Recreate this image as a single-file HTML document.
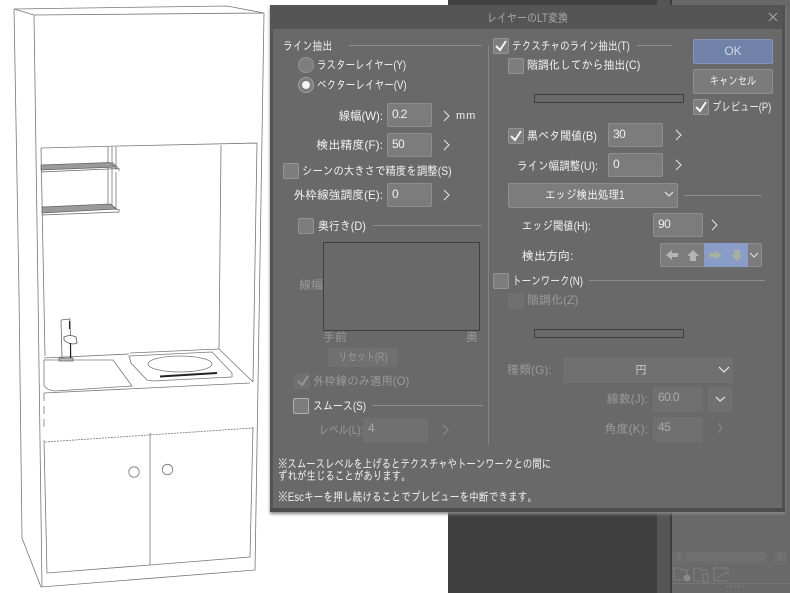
<!DOCTYPE html>
<html lang="ja"><head><meta charset="utf-8"><title>レイヤーのLT変換</title>
<style>
html,body{margin:0;padding:0;width:790px;height:593px;overflow:hidden;background:#fff}
body{position:relative;font-family:"Liberation Sans","IPAGothic","Noto Sans CJK JP",sans-serif;font-size:12px;color:#f0f0f0}
div{position:absolute;box-sizing:border-box}
.t{white-space:nowrap;line-height:14px;height:14px;transform:scaleX(var(--k,1));transform-origin:0 50%}
.d{color:#9a9a9a}
.r{text-align:right;transform-origin:100% 50%}
.m{text-align:center;transform-origin:50% 50%}
.i{background:#7c7c7c;border:1px solid #8e8e8e;border-radius:2px;color:#eee;padding:3px 0 0 4px;line-height:14px;font-size:12px;letter-spacing:-.6px}
.id{background:#707070;border:0;border-radius:2px;color:#aaa;padding:3px 0 0 6px;line-height:14px;font-size:12px;letter-spacing:-.6px}
.c{background:#7d7d7d;border:1px solid #949494;border-radius:2px;width:16px;height:16px}
.l{height:1px;background:#8c8c8c}
.b{background:#696969;border:1px solid #3f3f3f;height:9px;width:150px;left:534px}
svg{position:absolute;left:0;top:0}
</style></head><body>
<div style="left:448px;top:0;width:209px;height:593px;background:#404040"></div>
<div style="left:657px;top:0;width:13px;height:593px;background:#555"></div>
<div style="left:670px;top:0;width:2px;height:593px;background:#3c3c3c"></div>
<div style="left:672px;top:0;width:118px;height:593px;background:#696969"></div>
<svg width="790" height="593" viewBox="0 0 790 593" fill="none" stroke="#777" stroke-width=".8">
<path d="M14 9L34 15L264 13L227 6L14 9M14 9L19 293L22 538L41 587L255 570L264 13M34 15L38 293L42 587"/>
<path d="M41 148L120 146L257 143L253 382M41 148L45 356M221 145L219 349L253 382M44 358L129 354M130 353L219 349M44 393L250 383M44 440L47 573L150 565L250 557L253 427M150 433V565"/>
<path d="M44 393V428" stroke-dasharray="8 5"/>
<path d="M45 442L253 428" stroke-dasharray="2 1"/>
<path d="M108 147V204M112 147V206M116 147V170M116 172V210M112 162L118 168M110 204L118 210"/>
<path d="M41 165L110 162.500L116 167L41 170Z M42 207L110 204L116 209L42 213Z" fill="#9a9a9a" stroke="#666"/>
<path d="M41 172L119 168.500V171M42 215L119 212V209" stroke="#666"/>
<path d="M44 360L113 360L132 386L55 391Q46 390 44 385Z"/>
<path d="M129 356L212 352L232 373L232 377L153 381L147 380L131 363Z"/>
<ellipse cx="180" cy="364" rx="32" ry="8"/>
<path d="M160 376.500L217 373" stroke="#222" stroke-width="2"/>
<path d="M61 320L70 319L71 358M61 320L62 358" stroke="#666"/>
<path d="M59 358H73V361H59Z" fill="#bbb" stroke="#666"/>
<path d="M64 337Q70 334 76 337L77 343L74 344Q68 344 64 340Z" fill="#fff" stroke="#555"/>
<path d="M70.500 343V358M69.500 321V329" stroke="#222" stroke-width="1.100"/>
<circle cx="134" cy="472" r="5.200"/><circle cx="167.500" cy="469.500" r="5.200"/>
</svg>

<div style="left:672px;top:552px;width:11px;height:10px;background:#6f6f6f"></div>
<div style="left:685px;top:552px;width:82px;height:10px;border-radius:5px;background:#707070"></div>
<div style="left:775px;top:552px;width:11px;height:10px;background:#6f6f6f"></div>
<div style="left:672px;top:563px;width:118px;height:1px;background:#6f6f6f"></div>
<div style="left:672px;top:583px;width:118px;height:1px;background:#757575"></div>
<svg width="790" height="593" viewBox="0 0 790 593" fill="none" stroke="#7f7f7f" stroke-width="1">
<path d="M674 580V568H680L682 570H687V574M674 580H683M694 581V568H699L701 570H707V573M694 581H701M714 581V568H728V574M714 581H728M717 578L727 572"/>
<circle cx="687" cy="578" r="3.500" fill="#8a8a8a" stroke="none"/>
<path d="M703 574H708V582H703ZM702 574H709"/>
<path d="M680 554L677 557L680 560M779 554L782 557L779 560"/>
<path d="M727 586.500H745" stroke-dasharray="1 3" stroke="#8f8f8f"/>
</svg>

<!-- dialog -->
<div style="left:270px;top:5px;width:515px;height:507px;background:#555;box-shadow:0 2px 3px #888"></div>
<div style="left:273px;top:29px;width:509px;height:479px;background:#696969"></div>
<div style="left:782px;top:5px;width:3px;height:507px;background:#505050"></div>
<div style="left:270px;top:508px;width:515px;height:4px;background:#4c4c4c"></div>
<div class="t d m" style="left:270px;top:11px;width:515px;color:#a8a8a8;--k:.835">レイヤーのLT変換</div>
<svg width="790" height="593" viewBox="0 0 790 593" fill="none" stroke="#a8a8a8" stroke-width="1" style="z-index:1"><path d="M769 13L777 21M777 13L769 21"/></svg>

<div class="t" style="left:283px;top:39px;--k:.82">ライン抽出</div><div class="l" style="left:349px;top:45px;width:133px"></div>
<div style="left:298px;top:57px;width:16px;height:16px;border-radius:50%;background:#7d7d7d;border:1px solid #949494"></div>
<div class="t" style="left:317px;top:58px;--k:.795">ラスターレイヤー(Y)</div>
<div style="left:298px;top:77px;width:16px;height:16px;border-radius:50%;background:#7d7d7d;border:1px solid #a0a0a0"></div>
<div style="left:302px;top:81px;width:8px;height:8px;border-radius:50%;background:#f4f4f4"></div>
<div class="t" style="left:317px;top:78px;--k:.8">ベクターレイヤー(V)</div>

<div class="t r" style="left:283px;width:100px;top:109px;--k:.95">線幅(W):</div><div class="i" style="left:387px;top:103px;width:45px;height:24px">0.2</div>
<div class="t" style="left:456px;top:109px;font-size:11px;letter-spacing:1px">mm</div>
<div class="t r" style="left:283px;width:100px;top:138px">検出精度(F):</div><div class="i" style="left:387px;top:133px;width:45px;height:24px">50</div>
<div class="c" style="left:283px;top:163px"></div><div class="t" style="left:302px;top:164px;--k:.87">シーンの大きさで精度を調整(S)</div>
<div class="t r" style="left:283px;width:100px;top:188px;--k:.98">外枠線強調度(E):</div><div class="i" style="left:387px;top:183px;width:45px;height:24px">0</div>
<div class="c" style="left:298px;top:218px"></div><div class="t" style="left:318px;top:219px;--k:.91">奥行き(D)</div><div class="l" style="left:373px;top:225px;width:109px"></div>
<div style="left:323px;top:242px;width:157px;height:89px;border:1px solid #3f3f3f;background:#696969"></div>
<div class="t d" style="left:299px;top:278px">線幅</div>
<div class="t d" style="left:323px;top:330px">手前</div><div class="t d" style="left:466px;top:330px">奥</div>
<div style="left:328px;top:348px;width:70px;height:19px;background:#707070;border-radius:2px"></div>
<div class="t d m" style="left:328px;top:350px;width:70px;--k:.76">リセット(R)</div>
<div class="c" style="left:294px;top:373px;background:#707070;border:0"></div><div class="t d" style="left:313px;top:374px;--k:.95">外枠線のみ適用(O)</div>
<div class="c" style="left:293px;top:398px;border-color:#b0b0b0"></div><div class="t" style="left:313px;top:399px;--k:.83">スムース(S)</div><div class="l" style="left:372px;top:405px;width:111px"></div>
<div class="t d" style="left:319px;top:423px;--k:.82">レベル(L):</div><div class="id" style="left:363px;top:418px;width:65px;height:24px;padding-left:5px">4</div>

<div style="left:488px;top:45px;width:1px;height:400px;background:#858585"></div>

<div class="c" style="left:493px;top:38px"></div><div class="t" style="left:512px;top:39px;--k:.8">テクスチャのライン抽出(T)</div><div class="l" style="left:637px;top:45px;width:35px"></div>
<div class="c" style="left:508px;top:58px"></div><div class="t" style="left:527px;top:58px;--k:.91">階調化してから抽出(C)</div>
<div class="b" style="top:94px"></div>
<div style="left:693px;top:39px;width:80px;height:25px;background:#7082a8;border:1px solid #8494b8;border-radius:2px;text-align:center;line-height:23px;color:#cfd8ea">OK</div>
<div style="left:693px;top:69px;width:80px;height:25px;background:#7b7b7b;border:1px solid #8e8e8e;border-radius:2px"></div>
<div class="t m" style="left:693px;top:74px;width:80px;--k:.78">キャンセル</div>
<div class="c" style="left:693px;top:99px"></div><div class="t" style="left:712px;top:100px;--k:.78">プレビュー(P)</div>
<div class="c" style="left:508px;top:128px"></div><div class="t" style="left:527px;top:129px;--k:.92">黒ベタ閾値(B)</div><div class="i" style="left:608px;top:123px;width:55px;height:24px">30</div>
<div class="t" style="left:517px;top:159px;--k:.88">ライン幅調整(U):</div><div class="i" style="left:608px;top:153px;width:55px;height:24px">0</div>
<div style="left:508px;top:183px;width:170px;height:25px;background:#7c7c7c;border:1px solid #8e8e8e;border-radius:2px"></div>
<div class="t" style="left:545px;top:188px;--k:.88">エッジ検出処理1</div><div class="l" style="left:684px;top:195px;width:78px"></div>
<div class="t" style="left:522px;top:219px;--k:.86">エッジ閾値(H):</div><div class="i" style="left:653px;top:213px;width:50px;height:24px">90</div>
<div class="t" style="left:522px;top:249px">検出方向:</div>
<div style="left:660px;top:243px;width:102px;height:24px;background:#7c7c7c;border:1px solid #8e8e8e;border-radius:2px"></div>
<div style="left:704px;top:243px;width:44px;height:24px;background:#8a9dc8"></div>
<div class="c" style="left:493px;top:273px"></div><div class="t" style="left:512px;top:274px;--k:.8">トーンワーク(N)</div><div class="l" style="left:589px;top:280px;width:176px"></div>
<div class="c" style="left:508px;top:293px;background:#707070;border:0"></div><div class="t d" style="left:527px;top:293px">階調化(Z)</div>
<div class="b" style="top:329px"></div>
<div class="t d" style="left:507px;top:363px">種類(G):</div>
<div style="left:563px;top:358px;width:170px;height:25px;background:#707070;border-radius:2px"></div>
<div class="t" style="left:635px;top:363px;color:#c8c8c8">円</div>
<div class="t d r" style="left:580px;width:68px;top:392px">線数(J):</div><div class="id" style="left:653px;top:387px;width:50px;height:25px;padding-left:5px">60.0</div>
<div style="left:708px;top:387px;width:25px;height:25px;background:#707070;border-radius:2px"></div>
<div class="t d r" style="left:580px;width:68px;top:422px">角度(K):</div><div class="id" style="left:653px;top:417px;width:50px;height:25px;padding-left:5px">45</div>

<div class="t" style="left:278px;top:457px;--k:.785">※スムースレベルを上げるとテクスチャやトーンワークとの間に</div>
<div class="t" style="left:278px;top:469px;--k:.79">ずれが生じることがあります。</div>
<div class="t" style="left:278px;top:490px;--k:.81">※Escキーを押し続けることでプレビューを中断できます。</div>

<svg width="790" height="593" viewBox="0 0 790 593" fill="none" stroke="#e6e6e6" stroke-width="1.300" style="z-index:2">
<path d="M444 111L449 116L444 121M444 140L449 145L444 150M444 190L449 195L444 200M676 130L681 135L676 140M676 160L681 165L676 170M712 220L717 225L712 230" stroke-width="1"/>
<path d="M443 425L448 430L443 435M718 423L722 428L718 433" stroke="#8c8c8c" stroke-width="1"/>
<path d="M496 46L500 50L506 41M696 107L700 111L706 102M511 136L515 140L521 131" stroke="#f4f4f4" stroke-width="2"/>
<path d="M298 381L302 385L308 376" stroke="#969696" stroke-width="2"/>
<path d="M665 192L669 196L673 192" stroke="#d8d8d8"/>
<path d="M750 253L754 257L758 253" stroke="#e0e0e0" stroke-width="1"/>
<path d="M719 367L724 372L729 367M716 397L720 401L725 397" stroke="#dcdcdc"/>
<g fill="#b4b4b4" stroke="none">
<path d="M666 255L672 250V253H678V257H672V260Z"/>
<path d="M693 250L699 256H696V261H690V256H687Z"/>
</g>
<g fill="#a6b09a" stroke="none">
<path d="M721 255L715 250V253H709V257H715V260Z"/>
<path d="M737 261L731 255H734V250H740V255H743Z"/>
</g>
</svg>
</body></html>
